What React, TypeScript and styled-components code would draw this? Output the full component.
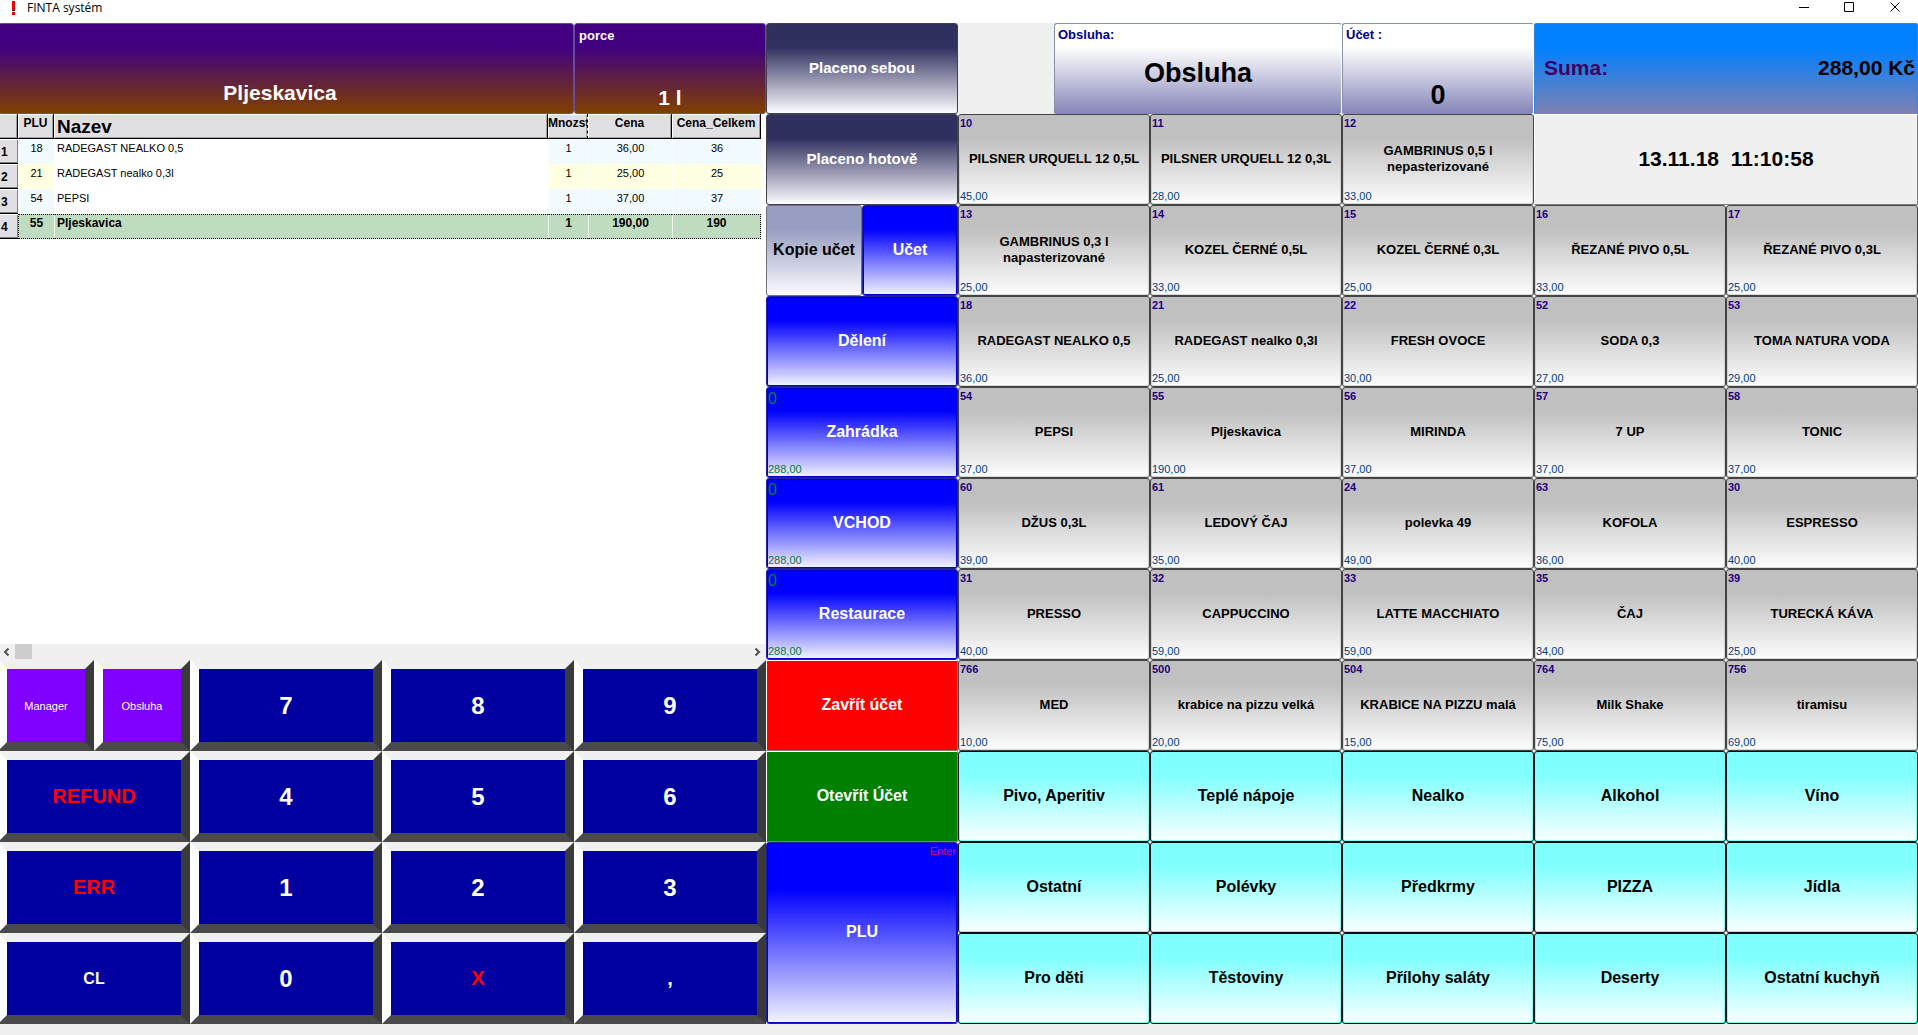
import React from "react";
import styled, { createGlobalStyle, css } from "styled-components";

const GlobalStyle = createGlobalStyle`
  *, *::before, *::after { box-sizing: border-box; }
  body {
    margin: 0;
    background: #f0f0f0;
    font-family: "Liberation Sans", Arial, sans-serif;
    color: #000;
  }
  button {
    margin: 0;
    padding: 0;
    border: 0;
    background: none;
    font: inherit;
    color: inherit;
    cursor: pointer;
  }
`;

const ROW = "91px";

const fade = (from: string, to: string) =>
  `linear-gradient(to bottom, ${from} 0%, ${from} 26%, ${to} 100%)`;

/* ---------- window ---------- */

const Window = styled.div`
  min-height: 100vh;
  overflow: hidden;
`;

const TitleBar = styled.header`
  display: flex;
  align-items: flex-start;
  justify-content: space-between;
  height: 23px;
  background: #fff;
`;

const TitleText = styled.h1`
  display: flex;
  align-items: center;
  gap: 11px;
  margin: 0;
  padding-left: 11px;
  font: 400 12px/16px "Open Sans", "Noto Sans", sans-serif;
`;

const WindowButtons = styled.div`
  display: flex;
`;

const WindowButton = styled.button`
  display: flex;
  justify-content: center;
  align-items: center;
  width: 46px;
  height: 15px;
`;

const Board = styled.main`
  display: grid;
  grid-template-columns: minmax(0, 8fr) minmax(0, 2fr) minmax(0, 10fr);
  margin-left: -2px;
`;

/* ---------- left pane ---------- */

const LeftPane = styled.section`
  display: grid;
  grid-template-rows: ${ROW} 1fr auto;
`;

const CurrentItem = styled.div`
  display: grid;
  grid-template-columns: 3fr 1fr;
`;

const ItemCell = styled.div`
  display: flex;
  flex-direction: column;
  justify-content: flex-end;
  align-items: center;
  padding: 0 12px 8px 0;
  border: 1px solid #6a4a9c;
  border-radius: 3px;
  background: ${fade("#400080", "#804000")};
  color: #fff;
  font-size: 21px;
  line-height: 24px;
  font-weight: 700;
`;

const PortionCell = styled(ItemCell)`
  justify-content: space-between;
  padding: 4px 4px 3px;
`;

const CellCaption = styled.span<{ $color?: string }>`
  align-self: flex-start;
  font-size: 13px;
  line-height: 16px;
  font-weight: 700;
  color: ${(p) => p.$color ?? "inherit"};
`;

const TablePane = styled.div`
  display: flex;
  flex-direction: column;
  justify-content: space-between;
  background: #fff;
`;

const TableWrap = styled.div`
  padding-right: 5px;
`;

const OrderTable = styled.table`
  width: 100%;
  table-layout: fixed;
  border-collapse: separate;
  border-spacing: 0;
  font-size: 11px;
  line-height: 14px;
`;

const Col = styled.col<{ $w?: number }>`
  width: ${(p) => (p.$w ? `${p.$w}px` : "auto")};
`;

const HeadCell = styled.th<{ $big?: boolean }>`
  height: 25px;
  padding: ${(p) => (p.$big ? "3px 3px 0" : "2px 0 0")};
  overflow: hidden;
  white-space: nowrap;
  vertical-align: top;
  text-align: ${(p) => (p.$big ? "left" : "center")};
  font-size: ${(p) => (p.$big ? 19 : 12)}px;
  line-height: ${(p) => (p.$big ? 20 : 14)}px;
  background: #e0dfe4;
  border-right: 1px solid #000;
  border-bottom: 1px solid #000;
  box-shadow: inset 1px 1px 0 #fff, inset -1px -1px 0 #a0a0a0;
`;

const ClippedHeadCell = styled(HeadCell)`
  text-align: left;
  border-right: 1px dashed #000;
`;

const RowNumber = styled.th`
  height: 25px;
  padding: 4px 0 0 3px;
  text-align: left;
  vertical-align: top;
  font-size: 12px;
  line-height: 18px;
  background: #e0dfe4;
  border-bottom: 1px solid #000;
  box-shadow: inset 0 1px 0 #fff, inset -1px -1px 0 #808080;
`;

const BodyCell = styled.td<{ $name?: boolean }>`
  height: 25px;
  padding: ${(p) => (p.$name ? "2px 2px 0" : "2px 0 0")};
  vertical-align: top;
  text-align: ${(p) => (p.$name ? "left" : "center")};
`;

const BodyRow = styled.tr<{ $tint: string; $selected?: boolean }>`
  ${BodyCell} {
    background: ${(p) => p.$tint};
    border-left: 1px solid rgba(255, 255, 255, 0.7);
  }
  ${BodyCell}:nth-child(3) {
    background: ${(p) => (p.$selected ? p.$tint : "#fff")};
  }
  ${(p) =>
    p.$selected &&
    css`
      font-size: 12px;
      font-weight: 700;
      ${BodyCell} {
        border-top: 1px dotted #000;
        border-bottom: 1px dotted #000;
        padding-top: 1px;
      }
      ${BodyCell}:nth-child(2) { border-left: 1px dotted #000; }
      ${BodyCell}:last-child { border-right: 1px dotted #000; }
    `}
`;

const ScrollBar = styled.div`
  display: flex;
  align-items: center;
  height: 16px;
  background: #f0f0f0;
`;

const ScrollArrow = styled.button`
  display: flex;
  align-items: center;
  justify-content: center;
  width: 17px;
  height: 16px;
`;

const ScrollTrack = styled.div`
  flex: 1;
  height: 16px;
`;

const ScrollThumb = styled.div`
  width: 17px;
  height: 15px;
  background: #cdcdcd;
`;

const Keypad = styled.div`
  display: grid;
  grid-template-columns: repeat(8, minmax(0, 1fr));
  grid-auto-rows: ${ROW};
`;

const Key = styled.button<{ $size: number; $half?: boolean; $danger?: boolean }>`
  grid-column: span ${(p) => (p.$half ? 1 : 2)};
  border: 9px solid;
  border-color: #f0f0f0 #3a3a3a #4a4a4a #fff;
  background: ${(p) => (p.$half ? "#8000ff" : "#0000a0")};
  color: ${(p) => (p.$danger ? "#ff0000" : "#fff")};
  font-size: ${(p) => p.$size}px;
  font-weight: ${(p) => (p.$half ? 400 : 700)};
`;

/* ---------- touch buttons ---------- */

const ActionColumn = styled.section`
  display: grid;
  grid-template-columns: repeat(2, minmax(0, 1fr));
  grid-auto-rows: ${ROW};
`;

const Touch = styled.button`
  display: grid;
  grid-template-rows: 17px 1fr 19px;
  border: 1px solid #444;
  border-radius: 3px;
  text-align: center;
`;

const actionTones = {
  navy: css`
    background: ${fade("#303060", "#fbfbff")};
    border-color: #404050;
    color: #fff;
  `,
  steel: css`
    background: ${fade("#989ec2", "#fbfbff")};
    border-color: #707080;
    color: #000;
  `,
  blue: css`
    background: ${fade("#0000ff", "#f4f4ff")};
    border-color: #2020a0;
    box-shadow: inset 0 0 0 1px #0000d0;
    color: #fff;
  `,
  red: css`
    background: #ff0000;
    border-color: #fff #808080 #808080 #fff;
    border-radius: 0;
    color: #fff;
  `,
  green: css`
    background: #008000;
    border-color: #fff #808080 #808080 #fff;
    border-radius: 0;
    color: #fff;
  `,
};

type Tone = keyof typeof actionTones;

const ActionButton = styled(Touch)<{ $tone: Tone; $half?: boolean; $tall?: boolean }>`
  grid-column: span ${(p) => (p.$half ? 1 : 2)};
  grid-row: span ${(p) => (p.$tall ? 2 : 1)};
  font-size: ${(p) => (p.$tone === "navy" ? 15 : 16)}px;
  font-weight: 700;
  ${(p) => actionTones[p.$tone]}
`;

const Counter = styled.span`
  padding-left: 1px;
  text-align: left;
  font-size: 16px;
  line-height: 22px;
  font-weight: 400;
  color: #008040;
`;

const Shortcut = styled.span`
  padding-right: 1px;
  text-align: right;
  font-size: 11px;
  line-height: 16px;
  font-weight: 400;
  color: #e00060;
`;

const Label = styled.span`
  grid-row: 2;
  align-self: center;
  line-height: 16px;
  white-space: pre-line;
`;

const Amount = styled.span<{ $color: string }>`
  grid-row: 3;
  align-self: end;
  padding: 0 0 1px 1px;
  text-align: left;
  font-size: 11px;
  line-height: 14px;
  font-weight: 400;
  color: ${(p) => p.$color};
`;

const Code = styled.span`
  padding-left: 1px;
  text-align: left;
  font-size: 11px;
  line-height: 16px;
  color: #200080;
`;

/* ---------- right pane ---------- */

const RightPane = styled.section`
  display: grid;
  grid-template-columns: repeat(5, minmax(0, 1fr));
  grid-auto-rows: ${ROW};
`;

const StatusRow = styled.div`
  grid-column: 1 / -1;
  display: grid;
  grid-template-columns: 1fr 3fr 2fr 4fr;
`;

const StatusCell = styled.div`
  grid-column: 2;
  display: flex;
  flex-direction: column;
  align-items: center;
  gap: 14px;
  padding: 3px;
  border: 1px solid #8890a8;
  border-right-color: #fff;
  border-bottom-color: #fff;
  border-radius: 3px;
  background: ${fade("#ffffff", "#8484b8")};
  font-size: 27px;
  line-height: 32px;
  font-weight: 700;
`;

const BillCell = styled(StatusCell)`
  grid-column: 3;
  gap: 36px;
`;

const TotalCell = styled.div`
  display: flex;
  justify-content: space-between;
  align-items: center;
  padding: 0 2px 2px 9px;
  border: 1px solid #3088e0;
  border-radius: 2px;
  background: ${fade("#0080ff", "#8080b0")};
  font-size: 21px;
  font-weight: 700;
`;

const TotalCaption = styled.span`
  color: #400060;
`;

const Clock = styled.time`
  grid-column: span 2;
  display: flex;
  align-items: center;
  justify-content: center;
  padding-bottom: 2px;
  border: 1px solid #fff;
  border-right-color: #808080;
  border-bottom-color: #808080;
  font-size: 21px;
  font-weight: 700;
  white-space: pre;
`;

const ProductButton = styled(Touch)`
  background: ${fade("#c0c0c0", "#fdfdfd")};
  box-shadow: inset 0 0 0 1px rgba(192, 192, 192, 0.6);
  font-size: 13px;
  font-weight: 700;
`;

const GroupButton = styled(Touch)`
  border-color: #001010;
  background: ${fade("#80ffff", "#fbffff")};
  box-shadow: inset 0 0 0 1px #80ffff;
  font-size: 16px;
  font-weight: 700;
`;

/* ---------- data ---------- */

const orderRows = [
  { plu: "18", name: "RADEGAST NEALKO 0,5", qty: "1", price: "36,00", total: "36", tint: "#f0faff" },
  { plu: "21", name: "RADEGAST nealko 0,3l", qty: "1", price: "25,00", total: "25", tint: "#ffffe1" },
  { plu: "54", name: "PEPSI", qty: "1", price: "37,00", total: "37", tint: "#f0faff" },
  { plu: "55", name: "Pljeskavica", qty: "1", price: "190,00", total: "190", tint: "#c0dcc0", selected: true },
];

type KeyDef = { label: string; size: number; half?: boolean; danger?: boolean };

const keys: KeyDef[] = [
  { label: "Manager", size: 11, half: true },
  { label: "Obsluha", size: 11, half: true },
  { label: "7", size: 24 },
  { label: "8", size: 24 },
  { label: "9", size: 24 },
  { label: "REFUND", size: 20, danger: true },
  { label: "4", size: 24 },
  { label: "5", size: 24 },
  { label: "6", size: 24 },
  { label: "ERR", size: 20, danger: true },
  { label: "1", size: 24 },
  { label: "2", size: 24 },
  { label: "3", size: 24 },
  { label: "CL", size: 16 },
  { label: "0", size: 24 },
  { label: "X", size: 20, danger: true },
  { label: ",", size: 20 },
];

type ActionDef = {
  label: string;
  tone: Tone;
  half?: boolean;
  tall?: boolean;
  count?: string;
  amount?: string;
  shortcut?: string;
};

const actions: ActionDef[] = [
  { label: "Placeno sebou", tone: "navy" },
  { label: "Placeno hotově", tone: "navy" },
  { label: "Kopie učet", tone: "steel", half: true },
  { label: "Učet", tone: "blue", half: true },
  { label: "Dělení", tone: "blue" },
  { label: "Zahrádka", tone: "blue", count: "0", amount: "288,00" },
  { label: "VCHOD", tone: "blue", count: "0", amount: "288,00" },
  { label: "Restaurace", tone: "blue", count: "0", amount: "288,00" },
  { label: "Zavřít účet", tone: "red" },
  { label: "Otevřít Účet", tone: "green" },
  { label: "PLU", tone: "blue", tall: true, shortcut: "Enter" },
];

type Product = [code: string, name: string, price: string];

const draughtBeers: Product[] = [
  ["10", "PILSNER URQUELL 12 0,5L", "45,00"],
  ["11", "PILSNER URQUELL 12 0,3L", "28,00"],
  ["12", "GAMBRINUS 0,5 l\nnepasterizované", "33,00"],
];

const products: Product[] = [
  ["13", "GAMBRINUS 0,3 l\nnapasterizované", "25,00"],
  ["14", "KOZEL ČERNÉ 0,5L", "33,00"],
  ["15", "KOZEL ČERNÉ 0,3L", "25,00"],
  ["16", "ŘEZANÉ PIVO 0,5L", "33,00"],
  ["17", "ŘEZANÉ PIVO 0,3L", "25,00"],
  ["18", "RADEGAST NEALKO 0,5", "36,00"],
  ["21", "RADEGAST nealko 0,3l", "25,00"],
  ["22", "FRESH OVOCE", "30,00"],
  ["52", "SODA 0,3", "27,00"],
  ["53", "TOMA NATURA VODA", "29,00"],
  ["54", "PEPSI", "37,00"],
  ["55", "Pljeskavica", "190,00"],
  ["56", "MIRINDA", "37,00"],
  ["57", "7 UP", "37,00"],
  ["58", "TONIC", "37,00"],
  ["60", "DŽUS 0,3L", "39,00"],
  ["61", "LEDOVÝ ČAJ", "35,00"],
  ["24", "polevka 49", "49,00"],
  ["63", "KOFOLA", "36,00"],
  ["30", "ESPRESSO", "40,00"],
  ["31", "PRESSO", "40,00"],
  ["32", "CAPPUCCINO", "59,00"],
  ["33", "LATTE MACCHIATO", "59,00"],
  ["35", "ČAJ", "34,00"],
  ["39", "TURECKÁ KÁVA", "25,00"],
  ["766", "MED", "10,00"],
  ["500", "krabice na pizzu velká", "20,00"],
  ["504", "KRABICE NA PIZZU malá", "15,00"],
  ["764", "Milk Shake", "75,00"],
  ["756", "tiramisu", "69,00"],
];

const groups = [
  "Pivo, Aperitiv", "Teplé nápoje", "Nealko", "Alkohol", "Víno",
  "Ostatní", "Polévky", "Předkrmy", "PIZZA", "Jídla",
  "Pro děti", "Těstoviny", "Přílohy saláty", "Deserty", "Ostatní kuchyň",
];

const ProductTile = ({ item: [code, name, price] }: { item: Product }) => (
  <ProductButton type="button">
    <Code>{code}</Code>
    <Label>{name}</Label>
    <Amount $color="#004080">{price}</Amount>
  </ProductButton>
);

export default function App() {
  return (
    <Window>
      <GlobalStyle />
      <TitleBar>
        <TitleText>
          <svg width="5" height="14" viewBox="0 0 5 14" aria-hidden="true">
            <path d="M1 0h3v9h-3z M1 11h3v3h-3z" fill="#f00000" />
            <path d="M1 9h3v1h-3z" fill="#400000" />
          </svg>
          FINTA systém
        </TitleText>
        <WindowButtons>
          <WindowButton type="button" aria-label="Minimalizovat">
            <svg width="11" height="11" viewBox="0 0 11 11">
              <path d="M1 5.5h10" stroke="#000" />
            </svg>
          </WindowButton>
          <WindowButton type="button" aria-label="Maximalizovat">
            <svg width="11" height="11" viewBox="0 0 11 11">
              <path d="M0.5 0.5h9v9h-9z" fill="none" stroke="#000" />
            </svg>
          </WindowButton>
          <WindowButton type="button" aria-label="Zavřít">
            <svg width="11" height="11" viewBox="0 0 11 11">
              <path d="M0.5 0.5l9 9M9.5 0.5l-9 9" stroke="#000" />
            </svg>
          </WindowButton>
        </WindowButtons>
      </TitleBar>

      <Board>
        <LeftPane>
          <CurrentItem>
            <ItemCell>Pljeskavica</ItemCell>
            <PortionCell>
              <CellCaption>porce</CellCaption>
              <span>1 l</span>
            </PortionCell>
          </CurrentItem>

          <TablePane>
            <TableWrap>
              <OrderTable>
                <colgroup>
                  <Col $w={20} />
                  <Col $w={36} />
                  <Col />
                  <Col $w={40} />
                  <Col $w={84} />
                  <Col $w={89} />
                </colgroup>
                <thead>
                  <tr>
                    <HeadCell aria-label="Řádek" />
                    <HeadCell scope="col">PLU</HeadCell>
                    <HeadCell scope="col" $big>Nazev</HeadCell>
                    <ClippedHeadCell scope="col">Mnozst</ClippedHeadCell>
                    <HeadCell scope="col">Cena</HeadCell>
                    <HeadCell scope="col">Cena_Celkem</HeadCell>
                  </tr>
                </thead>
                <tbody>
                  {orderRows.map((row, i) => (
                    <BodyRow key={row.plu} $tint={row.tint} $selected={row.selected}>
                      <RowNumber scope="row">{i + 1}</RowNumber>
                      <BodyCell>{row.plu}</BodyCell>
                      <BodyCell $name>{row.name}</BodyCell>
                      <BodyCell>{row.qty}</BodyCell>
                      <BodyCell>{row.price}</BodyCell>
                      <BodyCell>{row.total}</BodyCell>
                    </BodyRow>
                  ))}
                </tbody>
              </OrderTable>
            </TableWrap>
            <ScrollBar>
              <ScrollArrow type="button" aria-label="Doleva">
                <svg width="7" height="8" viewBox="0 0 7 8">
                  <path d="M5.5 0.5L2 4l3.5 3.5" fill="none" stroke="#505050" strokeWidth="2" />
                </svg>
              </ScrollArrow>
              <ScrollTrack>
                <ScrollThumb />
              </ScrollTrack>
              <ScrollArrow type="button" aria-label="Doprava">
                <svg width="7" height="8" viewBox="0 0 7 8">
                  <path d="M1.5 0.5L5 4L1.5 7.5" fill="none" stroke="#505050" strokeWidth="2" />
                </svg>
              </ScrollArrow>
            </ScrollBar>
          </TablePane>

          <Keypad>
            {keys.map((k) => (
              <Key key={k.label} type="button" $size={k.size} $half={k.half} $danger={k.danger}>
                {k.label}
              </Key>
            ))}
          </Keypad>
        </LeftPane>

        <ActionColumn>
          {actions.map((a) => (
            <ActionButton key={a.label} type="button" $tone={a.tone} $half={a.half} $tall={a.tall}>
              {a.count && <Counter>{a.count}</Counter>}
              {a.shortcut && <Shortcut>{a.shortcut}</Shortcut>}
              <Label>{a.label}</Label>
              {a.amount && <Amount $color="#008040">{a.amount}</Amount>}
            </ActionButton>
          ))}
        </ActionColumn>

        <RightPane>
          <StatusRow>
            <StatusCell>
              <CellCaption $color="#000090">Obsluha:</CellCaption>
              <span>Obsluha</span>
            </StatusCell>
            <BillCell>
              <CellCaption $color="#000090">Účet :</CellCaption>
              <span>0</span>
            </BillCell>
            <TotalCell>
              <TotalCaption>Suma:</TotalCaption>
              <span>288,00 Kč</span>
            </TotalCell>
          </StatusRow>
          {draughtBeers.map((item) => (
            <ProductTile key={item[0]} item={item} />
          ))}
          <Clock dateTime="2018-11-13T11:10:58">{"13.11.18  11:10:58"}</Clock>
          {products.map((item) => (
            <ProductTile key={item[0]} item={item} />
          ))}
          {groups.map((name) => (
            <GroupButton key={name} type="button">
              <Label>{name}</Label>
            </GroupButton>
          ))}
        </RightPane>
      </Board>
    </Window>
  );
}
